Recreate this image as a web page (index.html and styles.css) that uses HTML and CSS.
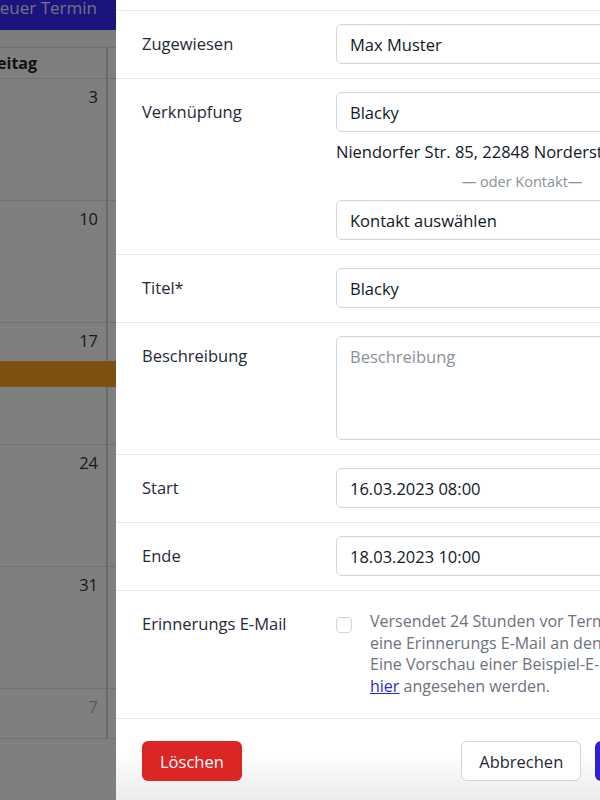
FILE: index.html
```html
<!DOCTYPE html>
<html>
<head>
  <title>Termin bearbeiten</title>
  <link rel="stylesheet" href="styles.css">
</head>
<body>
  <div class="calendar">
    <div class="toolbar"><span class="new-btn">Neuer Termin</span></div>
    <div class="month">
      <div class="day-head">Freitag</div>
      <div class="day-head">Samstag</div>

      <div class="cell"><span class="num">3</span></div>
      <div class="cell"><span class="num">4</span></div>
      <div class="cell"><span class="num">10</span></div>
      <div class="cell"><span class="num">11</span></div>
      <div class="cell"><span class="num">17</span><div class="event"></div></div>
      <div class="cell"><span class="num">18</span><div class="event"></div></div>
      <div class="cell"><span class="num">24</span></div>
      <div class="cell"><span class="num">25</span></div>
      <div class="cell"><span class="num">31</span></div>
      <div class="cell"><span class="num muted">1</span></div>
      <div class="cell short"><span class="num muted">7</span></div>
      <div class="cell short"><span class="num muted">8</span></div>
    </div>
    <div class="cal-foot"></div>
  </div>

  <div class="backdrop"></div>

  <div class="panel">
    <div class="fields">
      <div class="row-cut"></div>

      <div class="row">
        <label class="label" for="assignee">Zugewiesen</label>
        <input class="field" type="text" id="assignee" value="Max Muster">
      </div>

      <div class="row">
        <label class="label" for="link">Verknüpfung</label>
        <div>
          <input class="field" type="text" id="link" value="Blacky">
          <div class="address">Niendorfer Str. 85, 22848 Norderstedt</div>
          <div class="or">— oder Kontakt—</div>
          <input class="field contact" type="text" value="Kontakt auswählen">
        </div>
      </div>

      <div class="row">
        <label class="label" for="title">Titel*</label>
        <input class="field" type="text" id="title" value="Blacky">
      </div>

      <div class="row">
        <label class="label" for="desc">Beschreibung</label>
        <textarea class="field area" id="desc" placeholder="Beschreibung"></textarea>
      </div>

      <div class="row">
        <label class="label" for="start">Start</label>
        <input class="field" type="text" id="start" value="16.03.2023 08:00">
      </div>

      <div class="row">
        <label class="label" for="end">Ende</label>
        <input class="field" type="text" id="end" value="18.03.2023 10:00">
      </div>

      <div class="row">
        <label class="label" for="remind">Erinnerungs E-Mail</label>
        <div class="check">
          <input type="checkbox" id="remind">
          <p>Versendet 24 Stunden vor Terminbeginn<br>
            eine Erinnerungs E-Mail an den Kontakt.<br>
            Eine Vorschau einer Beispiel-E-Mail kann<br>
            <a href="#">hier</a> angesehen werden.</p>
        </div>
      </div>
    </div>

    <div class="footer">
      <button class="btn danger">Löschen</button>
      <button class="btn cancel">Abbrechen</button>
      <button class="btn primary">Speichern</button>
    </div>
  </div>
</body>
</html>
```

FILE: styles.css
```css
* {
  box-sizing: border-box;
}

body {
  margin: 0;
  width: 600px;
  height: 800px;
  overflow: hidden;
  font-family: "Open Sans", Arial, sans-serif;
  font-size: 16.5px;
  color: #1f2937;
  background-color: #fff;
}

/* calendar behind the dialog */
.calendar {
  margin-left: -27px;
  width: 300px;
}

.toolbar {
  height: 47px;
  background-color: #fafafa;
}

.new-btn {
  display: block;
  height: 30px;
  padding-left: 14px;
  background-color: #3428ff;
  color: #e4e2ff;
  font-size: 17px;
  line-height: 16px;
}

.month {
  display: grid;
  grid-template-columns: 135px 135px;
  grid-auto-rows: 122px;
  grid-template-rows: 31px;
  border-top: 1px solid #e0e0e0;
}

.day-head {
  padding-left: 8px;
  line-height: 30px;
  font-size: 16px;
  font-weight: bold;
  color: #222;
  border-bottom: 1px solid #e0e0e0;
  border-right: 2px solid #d4d4d4;
}

.cell {
  border-bottom: 1px solid #e0e0e0;
  border-right: 2px solid #d4d4d4;
  background-color: #fff;
}

.cell.short {
  height: 50px;
}

.num {
  display: block;
  text-align: right;
  padding: 6px 8px 0 0;
  color: #333;
}

.num.muted {
  color: #b4b4b4;
}

.event {
  height: 26px;
  margin-top: 9px;
  margin-right: -2px;
  background-color: #faa020;
}

.cal-foot {
  height: 60px;
  background-color: #bebebe;
}

.backdrop {
  position: fixed;
  inset: 0;
  background-color: rgba(0, 0, 0, 0.5);
}

/* dialog */
.panel {
  position: fixed;
  top: 0;
  bottom: 0;
  left: 116px;
  width: 618px;
  display: flex;
  flex-direction: column;
  background-color: #fff;
}

.fields {
  flex: 1;
  overflow: hidden;
}

.row-cut {
  height: 10.5px;
  border-bottom: 1px solid #e5e7eb;
}

.row {
  display: grid;
  grid-template-columns: 194px 372px;
  padding: 13.5px 26px;
  border-bottom: 1px solid #e5e7eb;
}

.label {
  line-height: 40px;
  color: #1f2937;
}

.field {
  display: block;
  width: 100%;
  height: 40px;
  padding: 0 13px;
  border: 1px solid #d1d5db;
  border-radius: 6px;
  font-family: inherit;
  font-size: 16.5px;
  color: #111827;
  background-color: #fff;
}

.field.area {
  height: 104px;
  padding-top: 8px;
  resize: none;
}

.field::placeholder {
  color: #8b909c;
}

.address {
  margin-top: 10px;
  line-height: 20px;
  white-space: nowrap;
  color: #111827;
}

.or {
  margin-top: 10px;
  line-height: 20px;
  text-align: center;
  font-size: 14.5px;
  color: #8b909c;
}

.field.contact {
  margin-top: 8px;
}

.check {
  display: flex;
  gap: 18px;
}

.check input {
  flex: none;
  width: 16px;
  height: 16px;
  margin: 13px 0 0;
  appearance: none;
  border: 1px solid #d1d5db;
  border-radius: 4px;
}

.check p {
  margin: 0;
  padding: 7px 0 8px;
  font-size: 16px;
  line-height: 21.5px;
  white-space: nowrap;
  color: #6b7280;
}

.check a {
  color: #2b1fd9;
}

.footer {
  display: flex;
  gap: 14px;
  padding: 22px 26px 19px;
  border-top: 1px solid #e5e7eb;
  background: linear-gradient(#fff 40%, #ececec);
}

.btn {
  height: 40px;
  padding: 0 17px;
  border: 1px solid transparent;
  border-radius: 6px;
  font-family: inherit;
  font-size: 16.5px;
}

.danger {
  background-color: #dc2626;
  color: #fff;
}

.cancel {
  margin-left: auto;
  background-color: #fff;
  border-color: #d1d5db;
  color: #1f2937;
}

.primary {
  background-color: #2f1fd6;
  color: #fff;
}
```
